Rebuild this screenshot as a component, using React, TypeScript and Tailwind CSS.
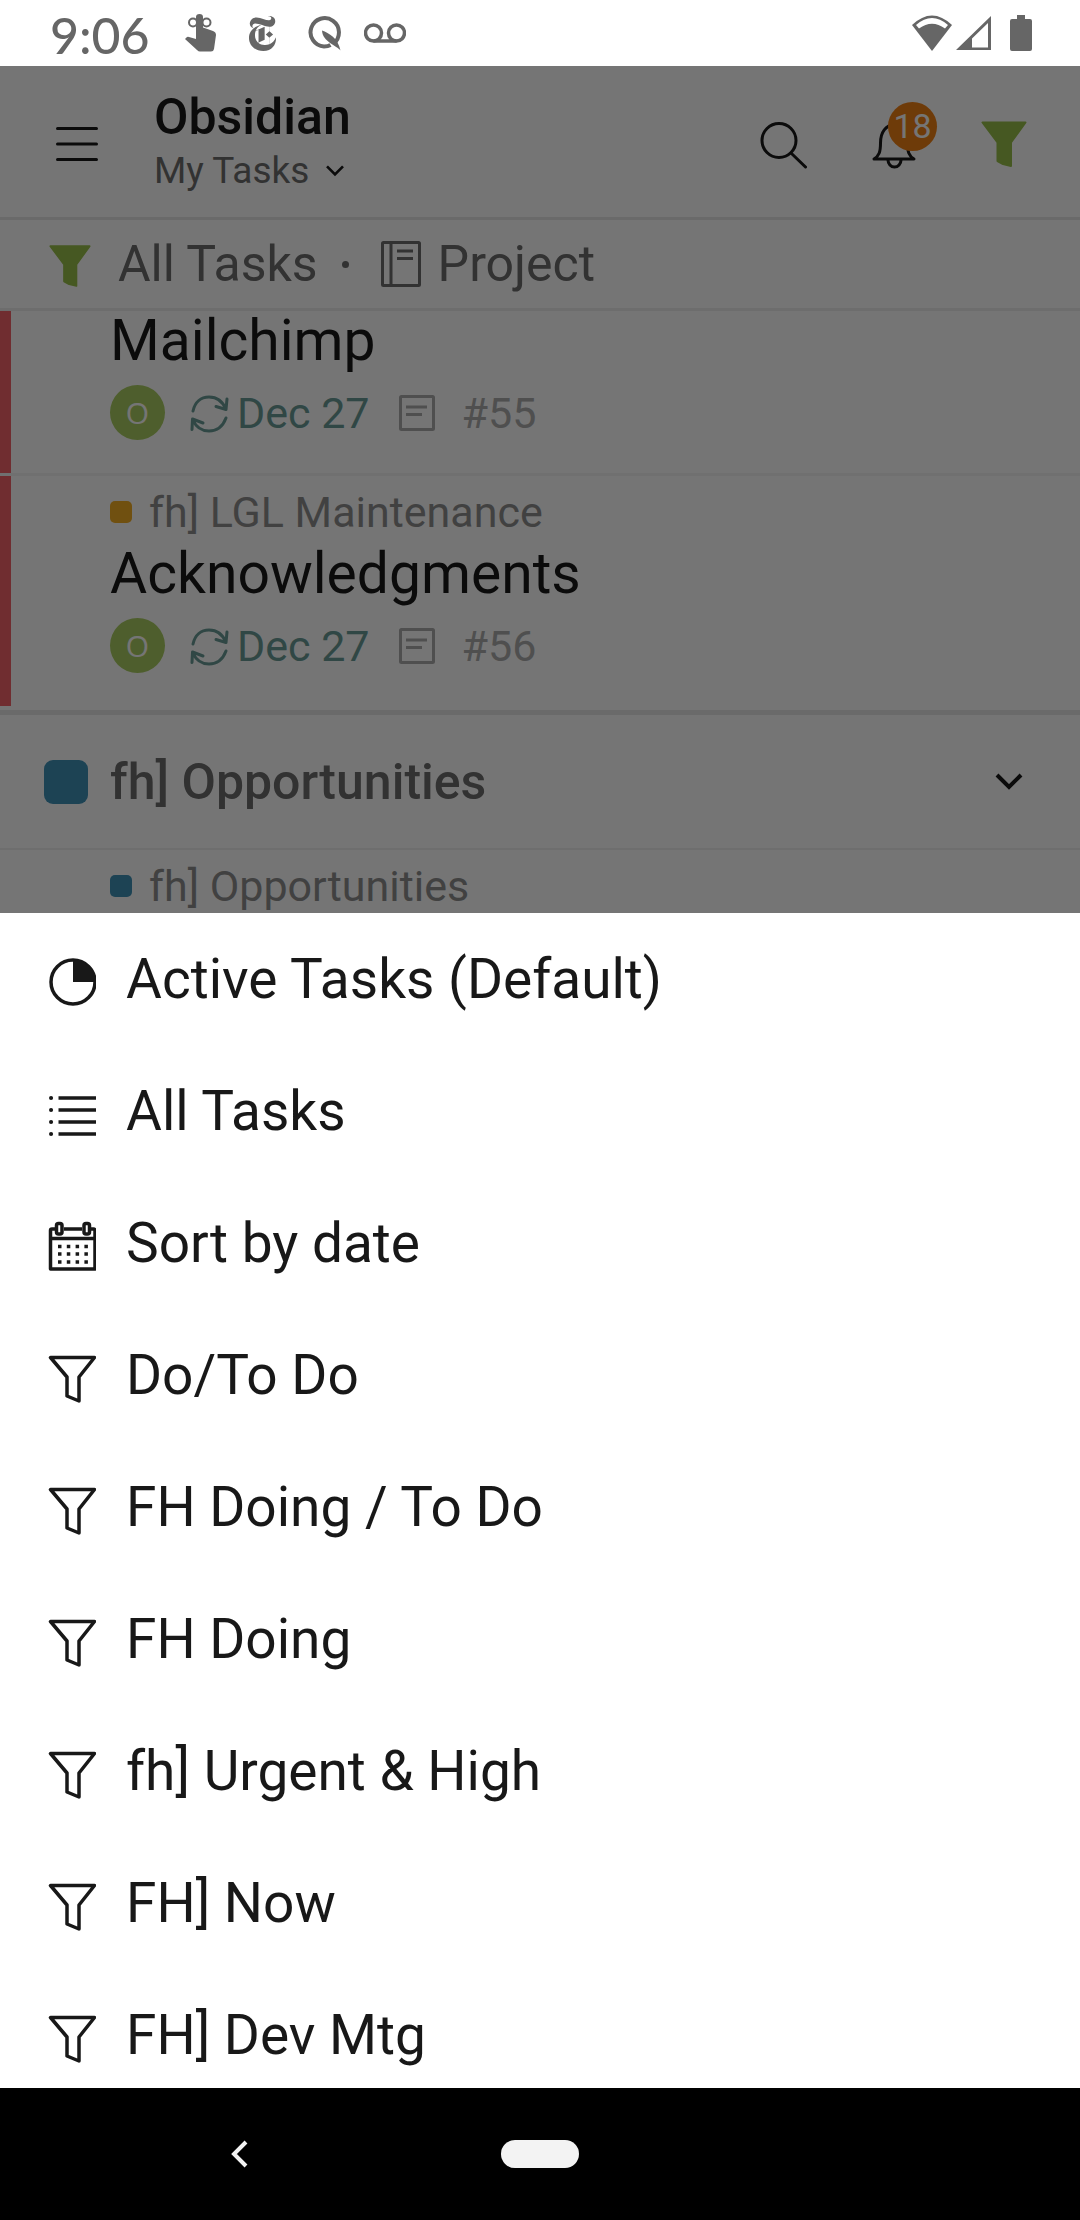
import React from "react";
import { SiNewyorktimes } from "react-icons/si";

type FilterIconName = "pie" | "list" | "calendar" | "funnel";

interface FilterOption {
  id: number;
  label: string;
  icon: FilterIconName;
}

interface TaskRowProps {
  title: string;
  number: string;
  project?: string;
}

const FILTERS: FilterOption[] = [
  { id: 1, label: "Active Tasks (Default)", icon: "pie" },
  { id: 2, label: "All Tasks", icon: "list" },
  { id: 3, label: "Sort by date", icon: "calendar" },
  { id: 4, label: "Do/To Do", icon: "funnel" },
  { id: 5, label: "FH Doing / To Do", icon: "funnel" },
  { id: 6, label: "FH Doing", icon: "funnel" },
  { id: 7, label: "fh] Urgent & High", icon: "funnel" },
  { id: 8, label: "FH] Now", icon: "funnel" },
  { id: 9, label: "FH] Dev Mtg", icon: "funnel" },
];

const SolidFunnel = ({ className }: { className: string }) => (
  <svg viewBox="0 -4 46 50" className={className} fill="currentColor" stroke="currentColor" strokeWidth="2" strokeLinejoin="round">
    <path d="M1.500 1.500H44.500L30 21.500V45L22 43L16.500 40V21.500Z" />
  </svg>
);

const ChevronDown = ({ className }: { className: string }) => (
  <svg viewBox="0 0 28 18" className={className} fill="none" stroke="currentColor" strokeWidth="4">
    <path d="M2 2L14 14L26 2" />
  </svg>
);

const FilterIcon = ({ name }: { name: FilterIconName }) => (
  <svg viewBox="0 0 48 56" className="h-14 w-12 shrink-0" fill="none" stroke="currentColor" strokeWidth="3.500" strokeLinejoin="round">
    {name === "pie" && (
      <>
        <circle cx="25" cy="31" r="22" />
        <path d="M25 31V9A22 22 0 0 1 47 31Z" fill="currentColor" stroke="none" />
      </>
    )}
    {name === "list" && (
      <>
        <path d="M10.500 15H48M10.500 27H48M10.500 39H48M10.500 51H48" />
        <path d="M3 15h.1M3 27h.1M3 39h.1M3 51h.1" strokeWidth="4" strokeLinecap="round" />
      </>
    )}
    {name === "calendar" && (
      <>
        <path d="M8 14H4Q2.500 14 2.500 15.500V54H47V15.500Q47 14 45.500 14H42M16 14H34M2.500 23.500H47" />
        <rect x="8.500" y="8.500" width="5.500" height="10.500" rx="2" />
        <rect x="36" y="8.500" width="5.500" height="10.500" rx="2" />
        <path d="M10 31.500H40M10 39H40M10 47H40" strokeDasharray="3.500 5.300" />
      </>
    )}
    {name === "funnel" && <path d="M2.500 10.500H46.500L31 30V54L19 49V30Z" />}
  </svg>
);

const StatusBar = () => (
  <div className="flex h-[66px] shrink-0 items-center justify-between bg-white pr-12 pl-[50px] text-[#666666]">
    <div className="flex items-center">
      <span className="w-[135px] pt-[3px] font-[Lato,sans-serif] text-[50px] leading-[60px] font-medium">9:06</span>
      <svg viewBox="0 0 32 38" className="h-[38px] w-8" fill="currentColor">
        <path d="M11 3a3.500 3 0 0 1 7 0V13.500L28 17Q31 18 31 21L29 35Q28.500 37.500 26 37.500H15Q13.500 37.500 12 36L0 25L2 23Q3 22.500 4 23L11 25Z" />
        <ellipse cx="8" cy="8.500" rx="4" ry="4" fill="none" stroke="currentColor" strokeWidth="2" />
        <ellipse cx="21.500" cy="8.500" rx="4" ry="4" fill="none" stroke="currentColor" strokeWidth="2" />
      </svg>
      <SiNewyorktimes className="ml-7 size-[35px]" />
      <svg viewBox="0 0 36 36" className="ml-[26px] size-9" fill="none" stroke="currentColor" strokeWidth="4">
        <path d="M27.500 28.500A14.200 14.200 0 1 0 18 31.500Q22 31.500 24.500 30" />
        <path d="M16 15.500C23 18 32 23 34.500 35.500C31 30.500 16.500 27 16 15.500Z" fill="currentColor" stroke="none" />
      </svg>
      <svg viewBox="0 0 42 20" className="ml-[22px] h-5 w-[42px]" fill="none" stroke="currentColor" strokeWidth="3.500">
        <circle cx="9.500" cy="10" r="8" />
        <circle cx="32.500" cy="10" r="8" />
        <path d="M9.500 18H32.500" />
      </svg>
    </div>
    <div className="flex items-center">
      <svg viewBox="0 0 40 36" className="h-9 w-10" fill="currentColor">
        <path d="M20 36L0 10Q20 -9 40 10Z" />
        <path d="M4 10Q20 -4 36 10L33 13.500Q20 4 7 13.500Z" fill="white" />
      </svg>
      <svg viewBox="0 0 36 36" className="ml-1 size-9" fill="currentColor">
        <path d="M0 35L35 1V35ZM16 32.500H32V8L16 23.500Z" fillRule="evenodd" />
      </svg>
      <svg viewBox="0 0 22 36" className="ml-[18px] h-9 w-[22px]" fill="currentColor">
        <path d="M7 0H15V4H20Q22 4 22 6V34Q22 36 20 36H2Q0 36 0 34V6Q0 4 2 4H7Z" />
      </svg>
    </div>
  </div>
);

const AppHeader = () => (
  <header className="flex h-[154px] items-center border-b-[3px] border-[#e8e8e8] pr-[53px] pl-14">
    <button type="button" aria-label="Menu">
      <svg viewBox="0 0 42 40" className="h-10 w-[42px]" fill="none" stroke="currentColor" strokeWidth="3" strokeLinecap="round">
        <path d="M1.500 6.500H40.500M1.500 22H40.500M1.500 37.500H40.500" />
      </svg>
    </button>
    <div className="ml-14 flex-1">
      <h1 className="text-[50px] leading-[56px] font-medium">Obsidian</h1>
      <button type="button" className="mt-[2px] flex items-center gap-4 text-[37px] leading-[48px] text-[#6d6d6d]">
        My Tasks
        <ChevronDown className="h-3 w-5 text-[#181818]" />
      </button>
    </div>
    <div className="flex items-center gap-[63px]">
      <button type="button" aria-label="Search">
        <svg viewBox="0 0 48 54" className="h-[54px] w-12" fill="none" stroke="currentColor" strokeWidth="3" strokeLinecap="round">
          <circle cx="20" cy="25.500" r="17" />
          <path d="M32.500 38.500L46.500 52" />
        </svg>
      </button>
      <button type="button" aria-label="Notifications" className="relative">
        <svg viewBox="0 0 48 54" className="h-[54px] w-12" fill="none" stroke="currentColor" strokeWidth="3" strokeLinejoin="round">
          <path d="M4 44C9 41 10.500 37 10.500 28C10.500 17 16 10 24 10S37.500 17 37.500 28C37.500 37 39 41 44 44Z" />
          <path d="M18 45a6.500 7 0 0 0 13 0" />
        </svg>
        <span className="absolute -top-[13px] left-[18px] flex size-[49px] items-center justify-center rounded-full bg-[#f08015] text-[34px] leading-none text-white">
          18
        </span>
      </button>
      <button type="button" aria-label="Filters" className="text-[#98c04a]">
        <SolidFunnel className="h-[50px] w-[46px]" />
      </button>
    </div>
  </header>
);

const FilterSummary = () => (
  <div className="flex h-[91px] items-center border-b-[3px] border-[#eeeeee] pl-[49px] text-[50px] leading-[60px] text-[#6d6d6d]">
    <SolidFunnel className="h-[46px] w-[42px] text-[#98c04a]" />
    <span className="ml-[27px]">All Tasks</span>
    <span className="ml-6 size-[7px] rounded-full bg-current" />
    <svg viewBox="0 0 40 46" className="ml-8 h-[46px] w-10" fill="none" stroke="currentColor" strokeWidth="3">
      <rect x="1.500" y="1.500" width="37" height="43" rx="1" />
      <path d="M10 2V44M16 10H32M16 17.500H32" />
    </svg>
    <span className="ml-[17px]">Project</span>
  </div>
);

const ProjectLabel = ({ name, color }: { name: string; color: string }) => (
  <p className="flex items-center gap-[17px] text-[#8f8f8f]">
    <span className={`size-[22px] rounded-[5px] ${color}`} />
    <span className="text-[43px] leading-[44px]">{name}</span>
  </p>
);

const TaskRow: React.FC<TaskRowProps> = ({ title, number, project }) => (
  <li className="flex border-[#f4f4f4] not-first:border-t-[3px]">
    <div className="w-[11px] bg-[#f5626a]" />
    <div className="flex-1 pb-[33px] pl-[99px]">
      {project && (
        <div className="pt-[14px] pb-[10px]">
          <ProjectLabel name={project} color="bg-[#f5ae23]" />
        </div>
      )}
      <h2 className="text-[57px] leading-[60px]">{title}</h2>
      <div className="mt-[14px] flex items-center text-[43px] leading-[50px]">
        <span className="flex size-[55px] items-center justify-center rounded-full bg-[#aace62] font-[Open_Sans,sans-serif] text-[30px] text-white">
          O
        </span>
        <svg viewBox="0 0 40 42" className="ml-6 h-[42px] w-10 text-[#6a9c96]" fill="none" stroke="currentColor" strokeWidth="3" strokeLinecap="round" strokeLinejoin="round">
          <path d="M4 19C6 10 12 5 20 5C28 5 34 10 37 17.500M38 7L37 17.500L27 14.500" />
          <path d="M37 26C34 34 28 39 20 39C12 39 7 35 4 28M3 37.500L3.500 27L14 31" />
        </svg>
        <span className="ml-2 text-[#6a9c96]">Dec 27</span>
        <svg viewBox="0 0 36 36" className="ml-[29px] size-9 text-[#acacac]" fill="none" stroke="currentColor" strokeWidth="3">
          <rect x="1.500" y="1.500" width="33" height="33" rx="1" />
          <path d="M7 12H28M7 19.500H23" />
        </svg>
        <span className="ml-[27px] text-[#acacac]">{number}</span>
      </div>
    </div>
  </li>
);

const App: React.FC = () => {
  return (
    <div className="flex h-screen flex-col bg-white font-[Roboto,sans-serif] text-[#181818]">
      <StatusBar />

      {/* Task list, dimmed while the filter sheet is open */}
      <main className="relative shrink-0 overflow-hidden">
        <AppHeader />
        <FilterSummary />
        <ul>
          <TaskRow title="Mailchimp" number="#55" />
          <TaskRow title="Acknowledgments" number="#56" project="fh] LGL Maintenance" />
        </ul>
        <section className="mt-1 border-t-[5px] border-[#e8e8e8]">
          <button type="button" className="flex h-[133px] w-full items-center pr-[57px] pl-11">
            <span className="size-11 rounded-[9px] bg-[#3f92b8]" />
            <span className="ml-[22px] flex-1 text-left text-[50px] leading-[56px] font-medium text-[#6d6d6d]">
              fh] Opportunities
            </span>
            <ChevronDown className="h-[18px] w-7" />
          </button>
          <div className="border-t-[2px] border-[#f0f0f0] pt-[14px] pb-[5px] pl-[110px]">
            <ProjectLabel name="fh] Opportunities" color="bg-[#3f92b8]" />
          </div>
        </section>
        <div className="absolute inset-0 bg-black/54" />
      </main>

      {/* Filter sheet */}
      <ul className="min-h-0 flex-1 overflow-y-auto bg-white [scrollbar-width:none]">
        {FILTERS.map((filter) => (
          <li key={filter.id}>
            <button type="button" className="flex h-[132px] w-full items-center gap-[30px] pl-12 text-left text-[55px] leading-[64px]">
              <FilterIcon name={filter.icon} />
              {filter.label}
            </button>
          </li>
        ))}
      </ul>

      {/* System navigation */}
      <nav className="grid h-[132px] shrink-0 grid-cols-[1fr_78px_1fr] items-center bg-black text-[#f3f3f3]">
        <button type="button" aria-label="Back" className="mr-6 justify-self-center">
          <svg viewBox="0 0 18 28" className="h-7 w-[18px]" fill="none" stroke="currentColor" strokeWidth="4">
            <path d="M16 2L4 14L16 26" />
          </svg>
        </button>
        <button type="button" aria-label="Home" className="h-7 rounded-full bg-current" />
      </nav>
    </div>
  );
};

export default App;
